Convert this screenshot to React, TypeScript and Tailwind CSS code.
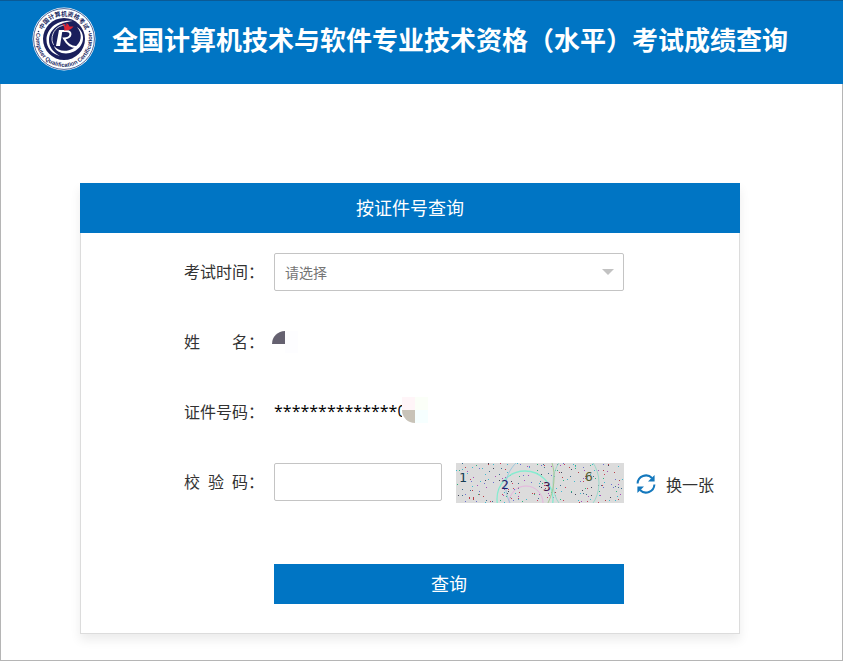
import type { ReactNode } from "react"

const SPECK_COLORS = ["#3f6f8f", "#c8405a", "#2fb380", "#a84fb8", "#44465a", "#3fb7cc", "#6d70cc", "#b84048"]

// small seeded generator so the noise is the same on every render
function makeSpecks(count: number) {
  let seed = 20231
  const next = () => {
    seed = (seed * 16807) % 2147483647
    return seed / 2147483647
  }
  return Array.from({ length: count }, () => ({
    x: Math.floor(next() * 168),
    y: Math.floor(next() * 40),
    fill: SPECK_COLORS[Math.floor(next() * SPECK_COLORS.length)],
  }))
}

const specks = makeSpecks(230)

function Logo() {
  return (
    <svg viewBox="0 0 64 64" className="size-16 shrink-0" role="img" aria-label="中国计算机资格考试">
      <defs>
        <path id="ring-top" d="M 8.8 32 A 23.2 23.2 0 0 1 55.2 32" />
        <path id="ring-bottom" d="M 8 17.5 A 28 28 0 1 0 56 17.5" />
      </defs>
      <circle cx="32" cy="32" r="31.5" fill="#fff" />
      <circle cx="32" cy="32" r="30.4" fill="none" stroke="#25407f" strokeWidth="0.8" />
      <circle cx="32" cy="32" r="21" fill="#1a1f5c" />
      <circle cx="6.5" cy="24.5" r="0.8" fill="#1c2a63" />
      <circle cx="57.5" cy="24.5" r="0.8" fill="#1c2a63" />
      <text fontSize="6" fontWeight="700" fill="#1c2a63" textAnchor="middle" fontFamily="Noto Sans CJK SC, sans-serif">
        <textPath href="#ring-top" startOffset="50%">中国计算机资格考试</textPath>
      </text>
      <text fontSize="5.8" fontWeight="700" fill="#1c2a63" textAnchor="middle" fontFamily="Liberation Sans, sans-serif">
        <textPath href="#ring-bottom" startOffset="50%">Computer Qualification Certification</textPath>
      </text>
      <g fill="#fff">
        <path d="M41 14 C26 12 14.5 21 14.5 33 C14.5 41 20 47 28 49 C21 45 17 40 17 33 C17 22 28 15 41 14z" />
        <path d="M45 20 C51 27 50 36 41 41.5 C34 45.5 26 44 22 39 C24 46 34 48.5 42 44.5 C53 39 54 26 45 20z" />
        <path d="M27 23 H30.5 L28 39 H24z" />
      </g>
      <g fill="none" stroke="#fff" strokeLinecap="round">
        <path d="M33 18 C25 18.5 20 25 20 32 C20 34 20.5 36 21.5 37.5" strokeWidth="0.8" />
        <path d="M29 24 H34 C40.5 24 40 31 32 31.5 C35 37 39 40.5 45 40" strokeWidth="2" />
      </g>
      <path d="M30 16 C32 17 33 18 34 19.5 L34.5 16 C36 17 37 18 37.5 19.5 L41.5 19.5 C39.5 22.5 36 24 32 23.5 C33 22 32 19 30 16z" fill="#dc2433" />
    </svg>
  )
}

function Captcha() {
  return (
    <svg viewBox="0 0 168 40" className="h-10 w-42 shrink-0" role="img" aria-label="验证码">
      <rect width="168" height="40" fill="#dcdcdc" />
      {specks.map((s, i) => (
        <rect key={i} x={s.x} y={s.y} width="1" height="1" fill={s.fill} />
      ))}
      <g fill="none">
        <circle cx="69" cy="36" r="28" stroke="#86ecd0" strokeWidth="1.3" />
        <circle cx="70" cy="40" r="17" stroke="#e7b4de" />
        <ellipse cx="120" cy="20" rx="23" ry="30" stroke="#9bd9cb" />
        <path d="M96 0 C100 12 98 28 92 40" stroke="#a5c894" />
        <path d="M60 0 C50 10 46 24 54 40" stroke="#9cc8dc" />
      </g>
      <g fontFamily="DejaVu Sans Mono, monospace" fontSize="13">
        <text x="3" y="19" fill="#163c52">1</text>
        <text x="45" y="26" fill="#24206a">2</text>
        <text x="87" y="28" fill="#451450">3</text>
        <text x="129" y="18" fill="#51592c">6</text>
      </g>
    </svg>
  )
}

function RefreshIcon() {
  return (
    <svg viewBox="0 0 20 20" className="size-5" aria-hidden="true">
      <g fill="none" stroke="#1478bd" strokeWidth="2">
        <path d="M1.6 9.5 A8.4 8.4 0 0 1 16 4" />
        <path d="M18.4 10.5 A8.4 8.4 0 0 1 4 16" />
      </g>
      <path d="M18.6 1 V7.4 H12z M1.4 19 V12.6 H8z" fill="#1478bd" />
    </svg>
  )
}

interface RowProps {
  label: string
  htmlFor?: string
  children: ReactNode
}

function Row({ label, htmlFor, children }: RowProps) {
  const labelClass = "w-[183px] shrink-0 whitespace-pre pb-0.5 text-right"
  return (
    <div className="flex h-10 items-center gap-2.5">
      {htmlFor ? (
        <label htmlFor={htmlFor} className={labelClass}>{label}</label>
      ) : (
        <span className={labelClass}>{label}</span>
      )}
      {children}
    </div>
  )
}

export default function App() {
  return (
    <div className="min-h-screen border border-[#b5b5b5] bg-white font-['Noto_Sans_CJK_SC',sans-serif] text-base text-[#333]">
      <header className="-mx-px -mt-px flex h-21 items-center gap-4 border-t border-[#0a5a96] bg-[#0075c4] pb-2 pl-8">
        <Logo />
        <h1 className="whitespace-nowrap text-[26px] font-bold text-white">
          全国计算机技术与软件专业技术资格（水平）考试成绩查询
        </h1>
      </header>

      <main className="pt-[99px] pr-[102px] pb-6 pl-[79px]">
        <form
          className="border border-t-0 border-[#dcdcdc] pb-[29px] shadow-[0_6px_10px_rgba(0,0,0,0.08)]"
          onSubmit={(e) => e.preventDefault()}
        >
          <h2 className="-mx-px flex h-[50px] items-center justify-center bg-[#0075c4] pb-0.5 text-lg text-white">
            按证件号查询
          </h2>

          <div className="flex flex-col gap-[30px] pt-[19px]">
            <Row label="考试时间：" htmlFor="exam-time">
              <div className="relative w-[350px]">
                <select
                  id="exam-time"
                  className="h-[38px] w-full appearance-none rounded-xs border border-[#c4c4c4] bg-white px-2.5 text-sm text-[#757575]"
                >
                  <option>请选择</option>
                </select>
                <svg viewBox="0 0 12 6" className="pointer-events-none absolute top-4 right-2.5 h-1.5 w-3" aria-hidden="true">
                  <path d="M0 0h12L6 6z" fill="#c2c2c2" />
                </svg>
              </div>
            </Row>

            <Row label="姓　　名：">
              <svg viewBox="0 0 26 22" className="-ml-0.5 h-[22px] w-[26px]" aria-hidden="true">
                <path d="M13 0v13H0A13 13 0 0 1 13 0z" fill="#656170" />
                <path d="M13 0h13v22H13z" fill="#fdfdff" />
              </svg>
            </Row>

            <Row label="证件号码：">
              <div className="relative pb-0.5 font-['Open_Sans',sans-serif] text-black">
                <span>**************0</span>
                <svg viewBox="0 0 26 26" className="absolute -top-0.5 left-32 size-[26px]" aria-hidden="true">
                  <path d="M0 0h26v26H0z" fill="#fff" />
                  <path d="M0 0h13v13H0z" fill="#fff5f8" />
                  <path d="M13 0h13v13H13z" fill="#fbfff8" />
                  <path d="M13 13h13v13H13z" fill="#f6ffff" />
                  <path d="M0 13h13v13A13 13 0 0 1 0 13z" fill="#c8c3b8" />
                </svg>
              </div>
            </Row>

            <Row label={"校\u2002验\u2002码："} htmlFor="captcha">
              <input
                id="captcha"
                type="text"
                className="h-[38px] w-42 rounded-xs border border-[#c4c4c4] px-2.5 text-sm outline-none"
              />
              <div className="ml-1 flex items-center gap-3 pt-0.5">
                <Captcha />
                <button type="button" className="flex shrink-0 items-center gap-2.5 pt-0.5">
                  <RefreshIcon />
                  换一张
                </button>
              </div>
            </Row>
          </div>

          <button type="submit" className="mt-[62px] ml-[193px] h-10 w-[350px] bg-[#0075c4] pb-0.5 text-lg text-white">
            查询
          </button>
        </form>
      </main>
    </div>
  )
}
